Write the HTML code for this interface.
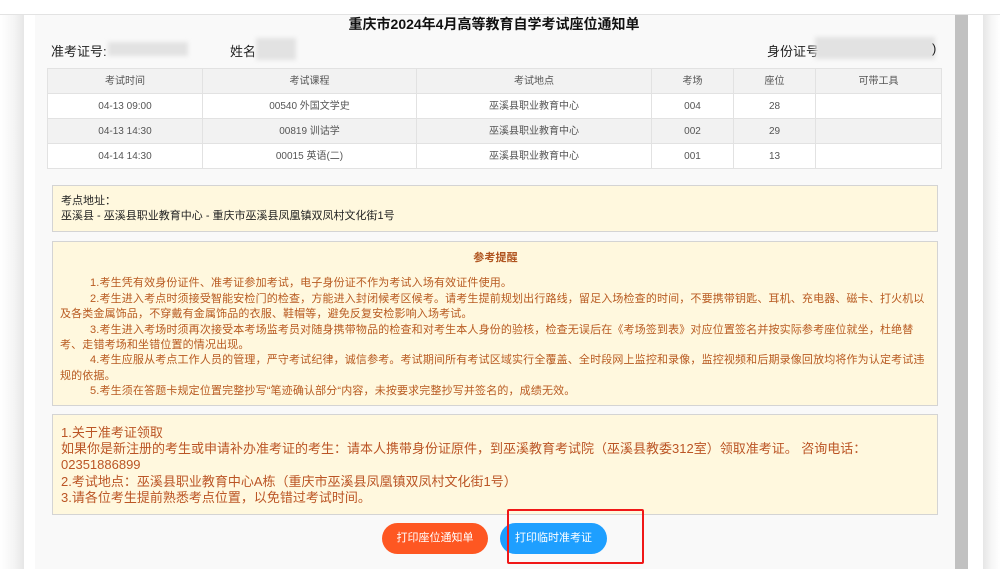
<!DOCTYPE html>
<html><head><meta charset="utf-8"><style>
*{margin:0;padding:0;box-sizing:border-box}
body{width:1000px;height:569px;overflow:hidden;background:#fff;font-family:"Liberation Sans","Noto Sans CJK SC",sans-serif;position:relative}
.a{position:absolute}
#topline{left:0;top:14px;width:1000px;height:1px;background:#e3e3e3}
#lsh{left:0;top:15px;width:24px;height:554px;background:linear-gradient(to right,#fff,#f4f4f4 60%,#e6e6e6)}
#page{left:24px;top:15px;width:931px;height:554px;background:#fff}
#inner{left:35px;top:15px;width:920px;height:554px;background:#f9f9f9}
#sb{left:955px;top:15px;width:13px;height:554px;background:#c1c1c1}
#rsh{left:983px;top:15px;width:17px;height:554px;background:linear-gradient(to right,#e6e6e6,#f6f6f6 50%,#fff)}
h1{position:absolute;left:0;width:1000px;text-align:center;top:14px;font-size:14px;font-weight:bold;color:#111;white-space:nowrap}
.lbl{font-size:13px;color:#222;white-space:nowrap}
.blur{background:#e2e2e2;filter:blur(2px)}
table{position:absolute;left:47px;top:68px;width:895px;border-collapse:collapse;font-size:10px;color:#555}
td{border:1px solid #e2e2e2;height:25px;line-height:23px;padding:0;text-align:center;vertical-align:middle;background:#fff;white-space:nowrap}
tr.g td{background:#f2f2f2}
.box{position:absolute;background:#fff8de;border:1px solid #d4d4d4;left:52px;width:886px}
.rem{font-size:11px;color:#b85a20;line-height:15.4px;letter-spacing:0.15px}
.rem p{text-indent:30px}
.not{font-size:13px;color:#bb5525;line-height:16.2px;padding:10px 0 0 8px}
.btn{position:absolute;top:523px;height:31px;border-radius:16px;color:#fff;font-size:11px;text-align:center;line-height:31px}
</style></head><body>
<div class="a" id="topline"></div>
<div class="a" id="lsh"></div>
<div class="a" id="page"></div>
<div class="a" id="inner"></div>
<div class="a" id="sb"></div>
<div class="a" id="rsh"></div>
<h1 style="left:-6px">重庆市2024年4月高等教育自学考试座位通知单</h1>
<div class="a lbl" style="left:51px;top:41px">准考证号:</div>
<div class="a blur" style="left:108px;top:42px;width:80px;height:14px"></div>
<div class="a lbl" style="left:230px;top:41px">姓名</div>
<div class="a blur" style="left:256px;top:38px;width:40px;height:22px"></div>
<div class="a lbl" style="left:767px;top:41px">身份证号</div>
<div class="a blur" style="left:815px;top:37px;width:120px;height:22px"></div>
<div class="a lbl" style="left:932px;top:41px">)</div>
<table>
<tr class="g"><td style="width:155px">考试时间</td><td style="width:214px">考试课程</td><td style="width:235px">考试地点</td><td style="width:82px">考场</td><td style="width:82px">座位</td><td>可带工具</td></tr>
<tr><td>04-13 09:00</td><td>00540 外国文学史</td><td>巫溪县职业教育中心</td><td>004</td><td>28</td><td></td></tr>
<tr class="g"><td>04-13 14:30</td><td>00819 训诂学</td><td>巫溪县职业教育中心</td><td>002</td><td>29</td><td></td></tr>
<tr><td>04-14 14:30</td><td>00015 英语(二)</td><td>巫溪县职业教育中心</td><td>001</td><td>13</td><td></td></tr>
</table>
<div class="box" style="top:185px;height:47px;font-size:11px;color:#222;line-height:15px;padding:8px 0 0 8px">考点地址：<br>巫溪县 - 巫溪县职业教育中心 - 重庆市巫溪县凤凰镇双凤村文化街1号</div>
<div class="box rem" style="top:241px;height:165px;padding:9px 6px 0 7px">
<div style="text-align:center;font-weight:bold;margin-bottom:10px;color:#b05520">参考提醒</div>
<p>1.考生凭有效身份证件、准考证参加考试，电子身份证不作为考试入场有效证件使用。</p>
<p>2.考生进入考点时须接受智能安检门的检查，方能进入封闭候考区候考。请考生提前规划出行路线，留足入场检查的时间，不要携带钥匙、耳机、充电器、磁卡、打火机以<br>及各类金属饰品，不穿戴有金属饰品的衣服、鞋帽等，避免反复安检影响入场考试。</p>
<p>3.考生进入考场时须再次接受本考场监考员对随身携带物品的检查和对考生本人身份的验核，检查无误后在《考场签到表》对应位置签名并按实际参考座位就坐，杜绝替<br>考、走错考场和坐错位置的情况出现。</p>
<p>4.考生应服从考点工作人员的管理，严守考试纪律，诚信参考。考试期间所有考试区域实行全覆盖、全时段网上监控和录像，监控视频和后期录像回放均将作为认定考试违<br>规的依据。</p>
<p>5.考生须在答题卡规定位置完整抄写“笔迹确认部分“内容，未按要求完整抄写并签名的，成绩无效。</p>
</div>
<div class="box not" style="top:414px;height:101px">1.关于准考证领取<br>如果你是新注册的考生或申请补办准考证的考生：请本人携带身份证原件，到巫溪教育考试院（巫溪县教委312室）领取准考证。 咨询电话：<br>02351886899<br>2.考试地点：巫溪县职业教育中心A栋（重庆市巫溪县凤凰镇双凤村文化街1号）<br>3.请各位考生提前熟悉考点位置，以免错过考试时间。</div>
<div class="btn" style="left:382px;width:106px;background:#fe5722">打印座位通知单</div>
<div class="btn" style="left:500px;width:107px;background:#1e9fff">打印临时准考证</div>
<div class="a" style="left:507px;top:509px;width:137px;height:55px;border:2px solid #f01818;border-radius:2px"></div>
</body></html>
